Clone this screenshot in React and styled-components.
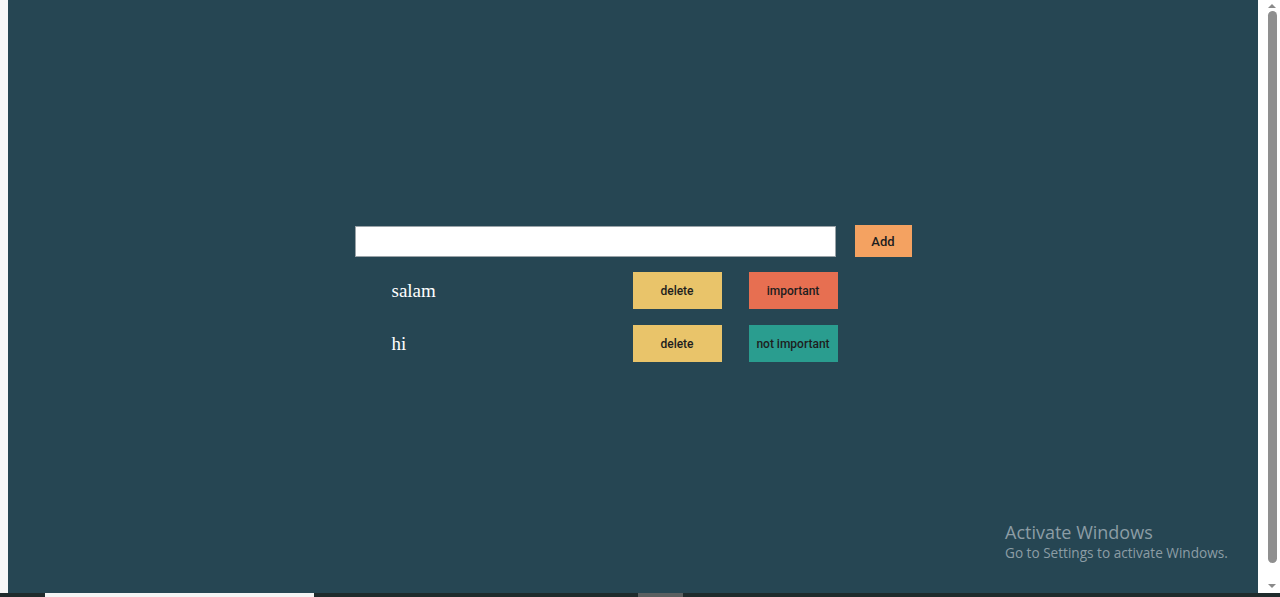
import React from 'react';
import styled, { createGlobalStyle } from 'styled-components';

const GlobalStyle = createGlobalStyle`
    html, body {
        margin: 0;
        padding: 0;
        overflow: hidden;
    }
    body {
        font-family: "Liberation Serif", serif;
    }
`;

const Screen = styled.div`
    width: 1280px;
    height: 597px;
    display: flex;
    flex-direction: column;
    background: #ffffff;
`;

const Window = styled.div`
    display: flex;
    height: 593px;
`;

const LeftEdge = styled.div`
    width: 8px;
    background: #f7f7f7;
`;

const Page = styled.main`
    position: relative;
    flex: 1;
    background: #264653;
    display: flex;
    flex-direction: column;
    align-items: center;
    padding-top: 225px;
    box-sizing: border-box;
`;

const Form = styled.form`
    display: flex;
    align-items: flex-start;
    gap: 19px;
    width: 557px;
`;

const Input = styled.input`
    width: 481px;
    height: 31px;
    margin-top: 1px;
    box-sizing: border-box;
    border: 1px solid #9aa3a8;
    background: #ffffff;
    outline: none;
    padding: 0 6px;
`;

const AddButton = styled.button`
    width: 57px;
    height: 32px;
    border: 0;
    background: #f4a261;
    color: #1e1e1e;
    font-family: Roboto, "Liberation Sans", sans-serif;
    font-size: 13px;
    font-weight: 500;
    cursor: pointer;
`;

const List = styled.ul`
    list-style: none;
    margin: 15px 0 0;
    padding: 0;
    width: 557px;
    display: flex;
    flex-direction: column;
    gap: 16px;
`;

const Row = styled.li`
    display: flex;
    align-items: center;
    height: 37px;
    padding-left: 37px;
`;

const Title = styled.span`
    width: 241px;
    color: #ffffff;
    font-family: "Liberation Serif", serif;
    font-size: 19px;
`;

const ActionButton = styled.button`
    width: 89px;
    height: 37px;
    border: 0;
    margin-right: 27px;
    background: ${({ $kind }) =>
        $kind === 'delete' ? '#e9c46a' : $kind === 'important' ? '#e76f51' : '#2a9d8f'};
    color: #1e1e1e;
    font-family: Roboto, "Liberation Sans", sans-serif;
    font-size: 12px;
    font-weight: 500;
    cursor: pointer;
`;

const Watermark = styled.div`
    position: absolute;
    left: 997px;
    top: 520px;
    color: #8c9da5;
    font-family: "Open Sans", "Noto Sans", sans-serif;
    pointer-events: none;

    h2 {
        margin: 0;
        font-size: 18px;
        font-weight: 400;
        line-height: 24px;
    }

    p {
        margin: 0;
        font-size: 13.6px;
        line-height: 18px;
    }
`;

const Scrollbar = styled.div`
    width: 22px;
    background: #ffffff;
    display: flex;
    flex-direction: column;
    align-items: center;
    padding-left: 6px;
    box-sizing: border-box;
`;

const Arrow = styled.div`
    width: 0;
    height: 0;
    border-left: 4px solid transparent;
    border-right: 4px solid transparent;
    ${({ $down }) => ($down ? 'border-top: 4px solid #8a8a8a;' : 'border-bottom: 4px solid #8a8a8a;')}
    margin: ${({ $down }) => ($down ? 'auto 0 5px' : '4px 0 0')};
`;

const Thumb = styled.div`
    width: 9px;
    height: 552px;
    margin-top: 3px;
    border-radius: 5px;
    background: #8f8f8f;
`;

const Taskbar = styled.div`
    height: 4px;
    background: #1f2b2c;
    display: flex;
`;

const TaskItem = styled.div`
    height: 4px;
    margin-left: ${({ $left }) => $left}px;
    width: ${({ $width }) => $width}px;
    background: ${({ $color }) => $color};
`;

const todos = [
    { id: 1, text: 'salam', important: false },
    { id: 2, text: 'hi', important: true },
];

const App = () => {
    const [items, setItems] = React.useState(todos);
    const [value, setValue] = React.useState('');

    const addItem = (e) => {
        e.preventDefault();
        if (!value.trim()) return;
        setItems([...items, { id: Date.now(), text: value, important: false }]);
        setValue('');
    };

    const removeItem = (id) => setItems(items.filter((item) => item.id !== id));

    const toggleItem = (id) =>
        setItems(items.map((item) => (item.id === id ? { ...item, important: !item.important } : item)));

    return (
        <>
            <GlobalStyle />
            <Screen>
                <Window>
                    <LeftEdge />
                    <Page>
                        <Form onSubmit={addItem}>
                            <Input value={value} onChange={(e) => setValue(e.target.value)} />
                            <AddButton type="submit">Add</AddButton>
                        </Form>
                        <List>
                            {items.map((item) => (
                                <Row key={item.id}>
                                    <Title>{item.text}</Title>
                                    <ActionButton $kind="delete" onClick={() => removeItem(item.id)}>
                                        delete
                                    </ActionButton>
                                    <ActionButton
                                        $kind={item.important ? 'not' : 'important'}
                                        onClick={() => toggleItem(item.id)}
                                    >
                                        {item.important ? 'not important' : 'important'}
                                    </ActionButton>
                                </Row>
                            ))}
                        </List>
                        <Watermark>
                            <h2>Activate Windows</h2>
                            <p>Go to Settings to activate Windows.</p>
                        </Watermark>
                    </Page>
                    <Scrollbar>
                        <Arrow />
                        <Thumb />
                        <Arrow $down />
                    </Scrollbar>
                </Window>
                <Taskbar>
                    <TaskItem $left={45} $width={269} $color="#f4f4f4" />
                    <TaskItem $left={324} $width={45} $color="#5a5f60" />
                </Taskbar>
            </Screen>
        </>
    );
};

export default App;
